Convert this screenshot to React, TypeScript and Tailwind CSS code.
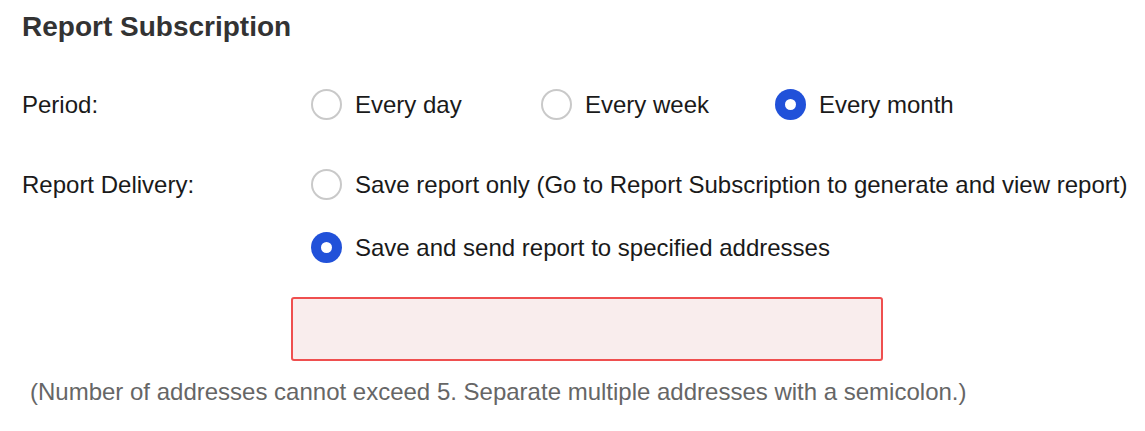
import { useState } from 'react';

type Period = 'day' | 'week' | 'month';
type Delivery = 'save' | 'send';

function Radio({
  checked,
  label,
  onClick,
  className = '',
}: {
  checked: boolean;
  label: string;
  onClick: () => void;
  className?: string;
}) {
  return (
    <button type="button" onClick={onClick} className={`flex items-center gap-[13px] text-left ${className}`}>
      {checked ? (
        <span className="flex h-[31px] w-[31px] shrink-0 items-center justify-center rounded-full bg-[#2151d9]">
          <span className="h-[11px] w-[11px] rounded-full bg-white" />
        </span>
      ) : (
        <span className="h-[31px] w-[31px] shrink-0 rounded-full border-2 border-[#c9c9c9] bg-white" />
      )}
      <span className="whitespace-nowrap text-[24px] leading-[28px] text-[#1a1a1a]">{label}</span>
    </button>
  );
}

export default function App() {
  const [period, setPeriod] = useState<Period>('month');
  const [delivery, setDelivery] = useState<Delivery>('send');

  return (
    <div className="h-[431px] w-[1145px] overflow-hidden bg-white pl-[22px] font-['Liberation_Sans',Arial,sans-serif] text-[#1a1a1a]">
      <h1 className="pt-[12px] text-[28px] leading-[30px] font-bold text-[#333]">Report Subscription</h1>

      <div className="mt-[47px] flex items-center">
        <div className="w-[289px] text-[24px] leading-[28px]">Period:</div>
        <div className="flex">
          <Radio className="w-[230px]" checked={period === 'day'} label="Every day" onClick={() => setPeriod('day')} />
          <Radio className="w-[234px]" checked={period === 'week'} label="Every week" onClick={() => setPeriod('week')} />
          <Radio checked={period === 'month'} label="Every month" onClick={() => setPeriod('month')} />
        </div>
      </div>

      <div className="mt-[49px] flex items-start">
        <div className="flex h-[31px] w-[289px] items-center text-[24px] leading-[28px]">Report Delivery:</div>
        <div className="flex flex-col gap-[32px]">
          <Radio
            checked={delivery === 'save'}
            label="Save report only (Go to Report Subscription to generate and view report)"
            onClick={() => setDelivery('save')}
          />
          <Radio
            checked={delivery === 'send'}
            label="Save and send report to specified addresses"
            onClick={() => setDelivery('send')}
          />
        </div>
      </div>

      <div className="mt-[34px] pl-[269px]">
        <textarea className="block h-[64px] w-[592px] resize-none rounded-[3px] border-2 border-[#ef4f4f] bg-[#f9eded] outline-none" />
      </div>

      <p className="mt-[17px] pl-[8px] text-[24px] leading-[28px] text-[#666]">
        (Number of addresses cannot exceed 5. Separate multiple addresses with a semicolon.)
      </p>
    </div>
  );
}
